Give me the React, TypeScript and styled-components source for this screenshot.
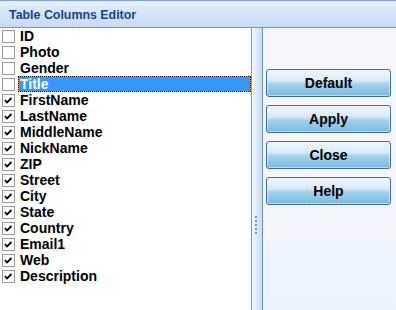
import styled, { createGlobalStyle } from 'styled-components'

type Column = {
  name: string
  visible: boolean
}

const columns: Column[] = [
  { name: 'ID', visible: false },
  { name: 'Photo', visible: false },
  { name: 'Gender', visible: false },
  { name: 'Title', visible: false },
  { name: 'FirstName', visible: true },
  { name: 'LastName', visible: true },
  { name: 'MiddleName', visible: true },
  { name: 'NickName', visible: true },
  { name: 'ZIP', visible: true },
  { name: 'Street', visible: true },
  { name: 'City', visible: true },
  { name: 'State', visible: true },
  { name: 'Country', visible: true },
  { name: 'Email1', visible: true },
  { name: 'Web', visible: true },
  { name: 'Description', visible: true },
]

const selected = 'Title'

const GlobalStyle = createGlobalStyle`
  html, body {
    margin: 0;
    padding: 0;
    background: #ffffff;
  }
  body {
    font-family: 'Liberation Sans', Arial, sans-serif;
  }
`

const Window = styled.div`
  width: 396px;
  height: 310px;
  display: flex;
  flex-direction: column;
  overflow: hidden;
`

const Header = styled.div`
  height: 28px;
  flex-shrink: 0;
  box-sizing: border-box;
  border-top: 1px solid #7fa2d4;
  border-bottom: 1px solid #6f97cf;
  background: linear-gradient(#e4eefb, #c6dbf6);
  display: flex;
  align-items: center;
  padding-left: 9px;
`

const Title = styled.span`
  font-size: 12.4px;
  font-weight: 700;
  color: #15428b;
  margin-top: 1px;
`

const Body = styled.div`
  flex: 1;
  display: flex;
  min-height: 0;
`

const List = styled.div`
  width: 251px;
  background: #ffffff;
  display: flex;
  flex-direction: column;
`

const Row = styled.div`
  height: 16px;
  display: flex;
  align-items: center;
`

const Box = styled.span`
  width: 13px;
  height: 13px;
  box-sizing: border-box;
  border: 1px solid #9a9a9a;
  background: #ffffff;
  margin-left: 2px;
  margin-right: 3px;
  display: flex;
  align-items: center;
  justify-content: center;
`

const Label = styled.span<{ $active?: boolean }>`
  flex: ${(p) => (p.$active ? 1 : 'none')};
  height: 16px;
  line-height: 14px;
  font-size: 14px;
  font-weight: 700;
  color: ${(p) => (p.$active ? '#ffffff' : '#000000')};
  box-sizing: border-box;
  border: 1px dotted ${(p) => (p.$active ? '#000000' : 'transparent')};
  background: ${(p) =>
    p.$active
      ? 'linear-gradient(#3399ff, #3399ff) padding-box, #f0a040 border-box'
      : 'transparent'};
  padding-left: 1px;
`

const Splitter = styled.div`
  width: 12px;
  box-sizing: border-box;
  border-left: 1px solid #7c9fd1;
  border-right: 1px solid #6a92cc;
  background: linear-gradient(90deg, #f3f7fd, #c7dbf5);
  display: flex;
  flex-direction: column;
  align-items: center;
  padding-top: 188px;
  padding-right: 3px;
  gap: 2px;
`

const Grip = styled.span`
  width: 2px;
  height: 2px;
  background: #6f93cd;
`

const Panel = styled.div`
  flex: 1;
  background: linear-gradient(#f5f7fc, #f3f5fb 210px, #edf4fd 220px, #ebf3fd);
  display: flex;
  flex-direction: column;
  padding: 41px 5px 0 3px;
  gap: 8px;
`

const Button = styled.button`
  height: 28px;
  width: 125px;
  padding: 0;
  border: 1px solid #3d6a96;
  border-radius: 3px;
  background: linear-gradient(#eef6fd 0%, #d8eaf8 40%, #a4d0ec 55%, #78bae1 100%);
  font-family: 'Liberation Sans', Arial, sans-serif;
  font-size: 14px;
  font-weight: 700;
  color: #000000;
  cursor: pointer;
  box-shadow: inset 0 0 0 1px rgba(255, 255, 255, 0.5);
`

const Check = () => (
  <svg width="9" height="9" viewBox="0 0 9 9">
    <path d="M1 4 L3 6.5 L7.5 2" stroke="#000" strokeWidth="1.8" fill="none" />
  </svg>
)

const App = () => {
  return (
    <Window>
      <GlobalStyle />
      <Header>
        <Title>Table Columns Editor</Title>
      </Header>
      <Body>
        <List>
          {columns.map((c) => (
            <Row key={c.name}>
              <Box>{c.visible && <Check />}</Box>
              <Label $active={c.name === selected}>{c.name}</Label>
            </Row>
          ))}
        </List>
        <Splitter>
          {[0, 1, 2, 3, 4].map((i) => (
            <Grip key={i} />
          ))}
        </Splitter>
        <Panel>
          <Button>Default</Button>
          <Button>Apply</Button>
          <Button>Close</Button>
          <Button>Help</Button>
        </Panel>
      </Body>
    </Window>
  )
}

export default App
